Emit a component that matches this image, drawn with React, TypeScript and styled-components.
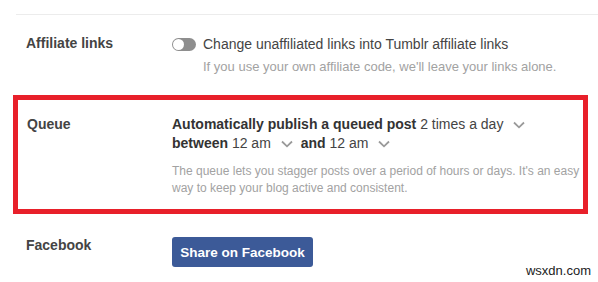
import React from "react";
import styled, { createGlobalStyle } from "styled-components";

const GlobalStyle = createGlobalStyle`
  html, body {
    margin: 0;
    padding: 0;
    background: #ffffff;
  }
  body {
    font-family: "Liberation Sans", Arial, Helvetica, sans-serif;
    -webkit-font-smoothing: antialiased;
  }
`;

const Page = styled.div`
  position: relative;
  width: 598px;
  height: 282px;
  padding-top: 14px;
  box-sizing: border-box;
  overflow: hidden;
  background: #ffffff;
`;

const Divider = styled.div`
  margin-left: 16px;
  border-top: 1px solid #ececec;
`;

const Row = styled.section<{ $pad: string; $labelWidth: number }>`
  display: grid;
  grid-template-columns: ${(p) => p.$labelWidth}px 1fr;
  padding: ${(p) => p.$pad};
`;

const Highlight = styled(Row)`
  margin: 0 10px 0 13px;
  border: 5px solid #e8202a;
`;

const Label = styled.div<{ $lh: number }>`
  font-size: 14px;
  font-weight: 700;
  color: #444444;
  line-height: ${(p) => p.$lh}px;
`;

const ToggleLine = styled.div`
  display: flex;
  align-items: center;
  gap: 7px;
  font-size: 14px;
  line-height: 20px;
  color: #444444;
`;

const Toggle = styled.span`
  position: relative;
  display: inline-block;
  width: 24px;
  height: 13px;
  border-radius: 7px;
  background: #8e8e8e;
  flex: none;
  &::after {
    content: "";
    position: absolute;
    left: 1px;
    top: 1px;
    width: 11px;
    height: 11px;
    border-radius: 50%;
    background: #ffffff;
  }
`;

const Hint = styled.div<{ $indent?: number; $mt: number; $lh: number; $size: number }>`
  font-size: ${(p) => p.$size}px;
  color: #a2a2a2;
  line-height: ${(p) => p.$lh}px;
  margin-top: ${(p) => p.$mt}px;
  padding-left: ${(p) => p.$indent ?? 0}px;
`;

const Line = styled.div`
  font-size: 14px;
  line-height: 19px;
  color: #444444;
  white-space: nowrap;
`;

const Strong = styled.b`
  font-weight: 700;
  color: #333333;
`;

const SelectWrap = styled.span`
  display: inline-flex;
  align-items: center;
`;

const ChevronIcon = styled.svg`
  margin-left: 10px;
  margin-right: 4px;
  flex: none;
`;

const Chevron = () => (
  <ChevronIcon width="12" height="8" viewBox="0 0 12 8" aria-hidden="true">
    <polyline points="1,1.5 6,6.3 11,1.5" fill="none" stroke="#9a9a9a" strokeWidth="1.8" />
  </ChevronIcon>
);

const Select = ({ children }: { children: React.ReactNode }) => (
  <SelectWrap>
    {children}
    <Chevron />
  </SelectWrap>
);

const FbButton = styled.button`
  margin-top: 1px;
  width: 141px;
  height: 30px;
  border: none;
  border-radius: 3px;
  background: #3c5a98;
  color: #ffffff;
  font-family: inherit;
  font-size: 13.5px;
  font-weight: 700;
  padding: 0;
  cursor: pointer;
`;

const Watermark = styled.div`
  position: absolute;
  right: 7px;
  bottom: 4px;
  font-size: 13px;
  line-height: 14px;
  color: #222222;
  background: #ffffff;
`;

export default function App() {
  return (
    <Page>
      <GlobalStyle />
      <Divider />
      <Row $pad="19px 0 19px 26px" $labelWidth={146}>
        <Label $lh={19}>Affiliate links</Label>
        <div>
          <ToggleLine>
            <Toggle />
            Change unaffiliated links into Tumblr affiliate links
          </ToggleLine>
          <Hint $indent={31} $mt={4} $lh={18} $size={13}>
            If you use your own affiliate code, we'll leave your links alone.
          </Hint>
        </div>
      </Row>
      <Highlight $pad="15px 0 12px 9px" $labelWidth={145}>
        <Label $lh={19}>Queue</Label>
        <div>
          <Line>
            <Strong>Automatically publish a queued post</Strong>{" "}
            <Select>2 times a day</Select>
          </Line>
          <Line>
            <Strong>between</Strong> <Select>12 am</Select> <Strong>and</Strong>{" "}
            <Select>12 am</Select>
          </Line>
          <Hint $mt={10} $lh={17} $size={12}>
            The queue lets you stagger posts over a period of hours or days. It's an easy way
            to keep your blog active and consistent.
          </Hint>
        </div>
      </Highlight>
      <Row $pad="22px 0 0 26px" $labelWidth={146}>
        <Label $lh={18}>Facebook</Label>
        <div>
          <FbButton type="button">Share on Facebook</FbButton>
        </div>
      </Row>
      <Watermark>wsxdn.com</Watermark>
    </Page>
  );
}
